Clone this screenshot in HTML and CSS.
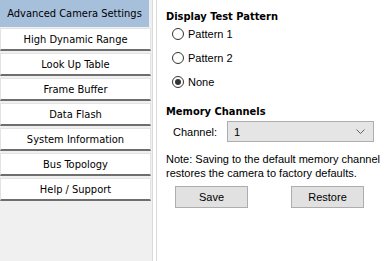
FILE: index.html
```html
<!DOCTYPE html>
<html lang="en">
<head>
  <meta charset="UTF-8" />
  <title>Advanced Camera Settings</title>
  <link rel="stylesheet" href="styles.css">
</head>
<body>

  <div class="window">
    <nav class="sidebar">
      <button class="tab active">Advanced Camera Settings</button>
      <button class="tab">High Dynamic Range</button>
      <button class="tab">Look Up Table</button>
      <button class="tab">Frame Buffer</button>
      <button class="tab">Data Flash</button>
      <button class="tab">System Information</button>
      <button class="tab">Bus Topology</button>
      <button class="tab">Help / Support</button>
    </nav>

    <div class="splitter"></div>

    <main class="panel">
      <h2 class="group-title">Display Test Pattern</h2>
      <div class="radio-list">
        <label class="radio"><span class="radio-circle"></span>Pattern 1</label>
        <label class="radio"><span class="radio-circle"></span>Pattern 2</label>
        <label class="radio checked"><span class="radio-circle"></span>None</label>
      </div>

      <h2 class="group-title memory">Memory Channels</h2>
      <div class="channel-row">
        <span class="channel-label">Channel:</span>
        <div class="combo">
          <span>1</span>
          <svg class="chevron" width="9" height="5" viewBox="0 0 9 5">
            <polyline points="0.5,0.5 4.5,4.5 8.5,0.5" fill="none" stroke="#5f5f5f" stroke-width="1"/>
          </svg>
        </div>
      </div>

      <p class="note">Note: Saving to the default memory channel<br>restores the camera to factory defaults.</p>

      <div class="actions">
        <button class="btn">Save</button>
        <button class="btn">Restore</button>
      </div>
    </main>
  </div>

</body>
</html>
```

FILE: styles.css
```css
body {
  margin: 0;
  background-color: #ffffff;
  font-family: "Liberation Sans", Arial, sans-serif;
  font-size: 11px;
  color: #000000;
}
.window {
  display: flex;
  height: 261px;
}
.sidebar {
  display: flex;
  flex-direction: column;
  width: 152px;
  background-color: #f0f0f0;
}
.tab {
  box-sizing: border-box;
  width: 151px;
  height: 23px;
  margin: 0 0 2px;
  padding: 0;
  background-color: #ffffff;
  border: 1px solid #e3e3e3;
  border-bottom: 2px solid #6e6e6e;
  font-family: "DejaVu Sans Condensed", "DejaVu Sans", sans-serif;
  font-stretch: condensed;
  font-size: 11px;
  color: #000000;
  text-align: center;
}
.tab.active {
  width: 149px;
  height: 27px;
  margin-bottom: 1px;
  background-color: #a6bfdb;
  border: none;
}
.splitter {
  width: 3px;
  border-left: 1px solid #dadada;
  border-right: 1px solid #dadada;
  background-color: #ffffff;
}
.panel {
  flex: 1;
  padding-left: 9px;
}
.group-title {
  margin: 10px 0 0;
  font-family: "DejaVu Sans Condensed", "DejaVu Sans", sans-serif;
  font-stretch: condensed;
  font-size: 11px;
  font-weight: bold;
  line-height: 13px;
}
.group-title.memory {
  margin-top: 11px;
}
.radio-list {
  margin-top: -1px;
}
.radio {
  display: flex;
  align-items: center;
  height: 24px;
  padding-left: 6px;
  gap: 4px;
}
.radio-circle {
  box-sizing: border-box;
  width: 12px;
  height: 12px;
  border: 1px solid #333333;
  border-radius: 50%;
  background-color: #ffffff;
  display: flex;
  align-items: center;
  justify-content: center;
}
.radio.checked .radio-circle::after {
  content: "";
  width: 6px;
  height: 6px;
  border-radius: 50%;
  background-color: #333333;
}
.channel-row {
  display: flex;
  align-items: center;
  margin-top: 3px;
  padding-left: 7px;
}
.channel-label {
  width: 54px;
}
.combo {
  box-sizing: border-box;
  display: flex;
  align-items: center;
  justify-content: space-between;
  width: 147px;
  height: 21px;
  padding: 0 8px 0 6px;
  background-color: #e5e5e5;
  border: 1px solid #adadad;
}
.note {
  margin: 10px 0 0;
  line-height: 14px;
}
.actions {
  display: flex;
  gap: 43px;
  margin-top: 6px;
  padding-left: 9px;
}
.btn {
  width: 73px;
  height: 22px;
  padding: 0;
  background-color: #e1e1e1;
  border: 1px solid #adadad;
  font-family: "Liberation Sans", Arial, sans-serif;
  font-size: 11px;
  color: #000000;
}
```
